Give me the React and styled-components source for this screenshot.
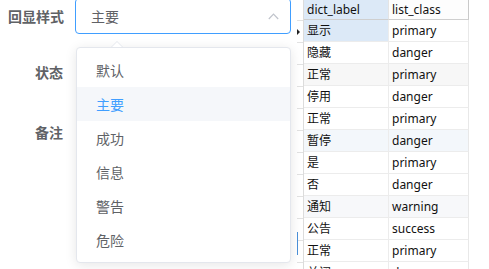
import React from "react";
import styled, { createGlobalStyle } from "styled-components";

const Global = createGlobalStyle`
  html, body { margin: 0; padding: 0; background: #fff; overflow: hidden; }
  body { font-family: "Noto Sans", "Noto Sans CJK SC", sans-serif; }
`;

const Page = styled.div`
  display: flex;
  align-items: flex-start;
  width: 489px;
  height: 269px;
  overflow: hidden;
`;

const FormPanel = styled.div`
  width: 283px;
  padding-left: 8px;
  display: flex;
  flex-direction: column;
  margin-top: -2px;
`;

const FormRow = styled.div`
  display: flex;
  align-items: flex-start;
  gap: 12px;
  margin-bottom: ${(p) => p.$mb || 0}px;
`;

const Label = styled.div`
  width: 55px;
  text-align: right;
  font-family: "Noto Sans CJK SC", sans-serif;
  font-size: 14px;
  font-weight: 700;
  color: #606266;
  line-height: 36px;
  white-space: nowrap;
`;

const SelectWrap = styled.div`
  position: relative;
  width: 216px;
`;

const SelectBox = styled.div`
  box-sizing: border-box;
  height: 36px;
  border: 1px solid #409eff;
  border-radius: 4px;
  display: flex;
  align-items: center;
  justify-content: space-between;
  padding: 0 11px 0 15px;
  font-family: "Noto Sans CJK SC", sans-serif;
  font-size: 14px;
  color: #606266;
`;

const Popup = styled.div`
  position: absolute;
  left: 1px;
  top: 49px;
  width: 215px;
  box-sizing: border-box;
  background: #fff;
  border: 1px solid #e4e7ed;
  border-radius: 4px;
  box-shadow: 0 2px 12px 0 rgba(0, 0, 0, 0.1);
  padding: 5px 0;
  z-index: 5;
`;

const Arrow = styled.div`
  position: absolute;
  top: -7px;
  left: 34px;
  width: 0;
  height: 0;
  border-left: 6px solid transparent;
  border-right: 6px solid transparent;
  border-bottom: 6px solid #e4e7ed;
  &::after {
    content: "";
    position: absolute;
    left: -5px;
    top: 1px;
    border-left: 5px solid transparent;
    border-right: 5px solid transparent;
    border-bottom: 5px solid #fff;
  }
`;

const Option = styled.div`
  height: 34px;
  line-height: 34px;
  padding-left: 19px;
  font-family: "Noto Sans CJK SC", sans-serif;
  font-size: 14px;
  color: ${(p) => (p.$selected ? "#409eff" : "#606266")};
  background: ${(p) => (p.$hover ? "#f5f7fa" : "transparent")};
`;

const Gutter = styled.div`
  width: 6px;
  margin-left: 6px;
  display: flex;
  flex-direction: column;
  position: relative;
`;

const GutterCell = styled.div`
  box-sizing: border-box;
  height: ${(p) => p.$h}px;
  border-bottom: 1px solid #e2e2e2;
  display: flex;
  align-items: center;
  justify-content: flex-start;
`;

const Marker = styled.div`
  width: 0;
  height: 0;
  border-top: 3px solid transparent;
  border-bottom: 3px solid transparent;
  border-left: 3px solid #222;
`;

const Caret = styled.div`
  position: absolute;
  left: 0;
  top: 232px;
  width: 1px;
  height: 23px;
  background: #4a90d9;
`;

const Table = styled.div`
  display: grid;
  grid-template-columns: 85px 80px;
  border-left: 1px solid #dcdcdc;
  font-family: "Noto Sans", "Noto Sans CJK SC", sans-serif;
  font-size: 12px;
  color: #111;
`;

const HeadCell = styled.div`
  box-sizing: border-box;
  height: 20px;
  line-height: 19px;
  padding-left: 3px;
  background: ${(p) => (p.$active ? "#dce9f7" : "#fdfdfd")};
  border-bottom: 1px solid #cfcfcf;
  border-right: 1px solid ${(p) => (p.$last ? "#c9c9c9" : "#e4e4e4")};
`;

const Cell = styled.div`
  box-sizing: border-box;
  height: 22px;
  line-height: 21px;
  padding-left: 3px;
  white-space: nowrap;
  overflow: hidden;
  background: ${(p) => p.$bg};
  border-bottom: 1px solid #ececec;
  border-right: 1px solid ${(p) => (p.$last ? "#e8e8e8" : "#ececec")};
`;

const rows = [
  ["显示", "primary"],
  ["隐藏", "danger"],
  ["正常", "primary"],
  ["停用", "danger"],
  ["正常", "primary"],
  ["暂停", "danger"],
  ["是", "primary"],
  ["否", "danger"],
  ["通知", "warning"],
  ["公告", "success"],
  ["正常", "primary"],
  ["关闭", "danger"],
];

const options = ["默认", "主要", "成功", "信息", "警告", "危险"];

const tint = { 2: "#f7f7f7", 5: "#f3f7fb", 8: "#f7f8fa" };

function ChevronUp() {
  return (
    <svg width="11" height="7" viewBox="0 0 11 7" fill="none">
      <polyline points="0.8,6 5.5,1.2 10.2,6" stroke="#c0c4cc" strokeWidth="1.2" />
    </svg>
  );
}

export default function App() {
  return (
    <Page>
      <Global />
      <FormPanel>
        <FormRow $mb={20}>
          <Label>回显样式</Label>
          <SelectWrap>
            <SelectBox>
              <span>主要</span>
              <ChevronUp />
            </SelectBox>
            <Popup>
              <Arrow />
              {options.map((o) => (
                <Option key={o} $selected={o === "主要"} $hover={o === "主要"}>
                  {o}
                </Option>
              ))}
            </Popup>
          </SelectWrap>
        </FormRow>
        <FormRow $mb={24}>
          <Label>状态</Label>
        </FormRow>
        <FormRow>
          <Label>备注</Label>
        </FormRow>
      </FormPanel>
      <Gutter>
        <GutterCell $h={21} />
        {rows.map((r, i) => (
          <GutterCell key={i} $h={22}>
            {i === 0 && <Marker />}
          </GutterCell>
        ))}
        <Caret />
      </Gutter>
      <Table>
        <HeadCell $active>dict_label</HeadCell>
        <HeadCell $last>list_class</HeadCell>
        {rows.map((r, i) => (
          <React.Fragment key={i}>
            <Cell $bg={i === 0 ? "#dce9f7" : tint[i] || "#fff"}>{r[0]}</Cell>
            <Cell $last $bg={tint[i] || "#fff"}>{r[1]}</Cell>
          </React.Fragment>
        ))}
      </Table>
    </Page>
  );
}
